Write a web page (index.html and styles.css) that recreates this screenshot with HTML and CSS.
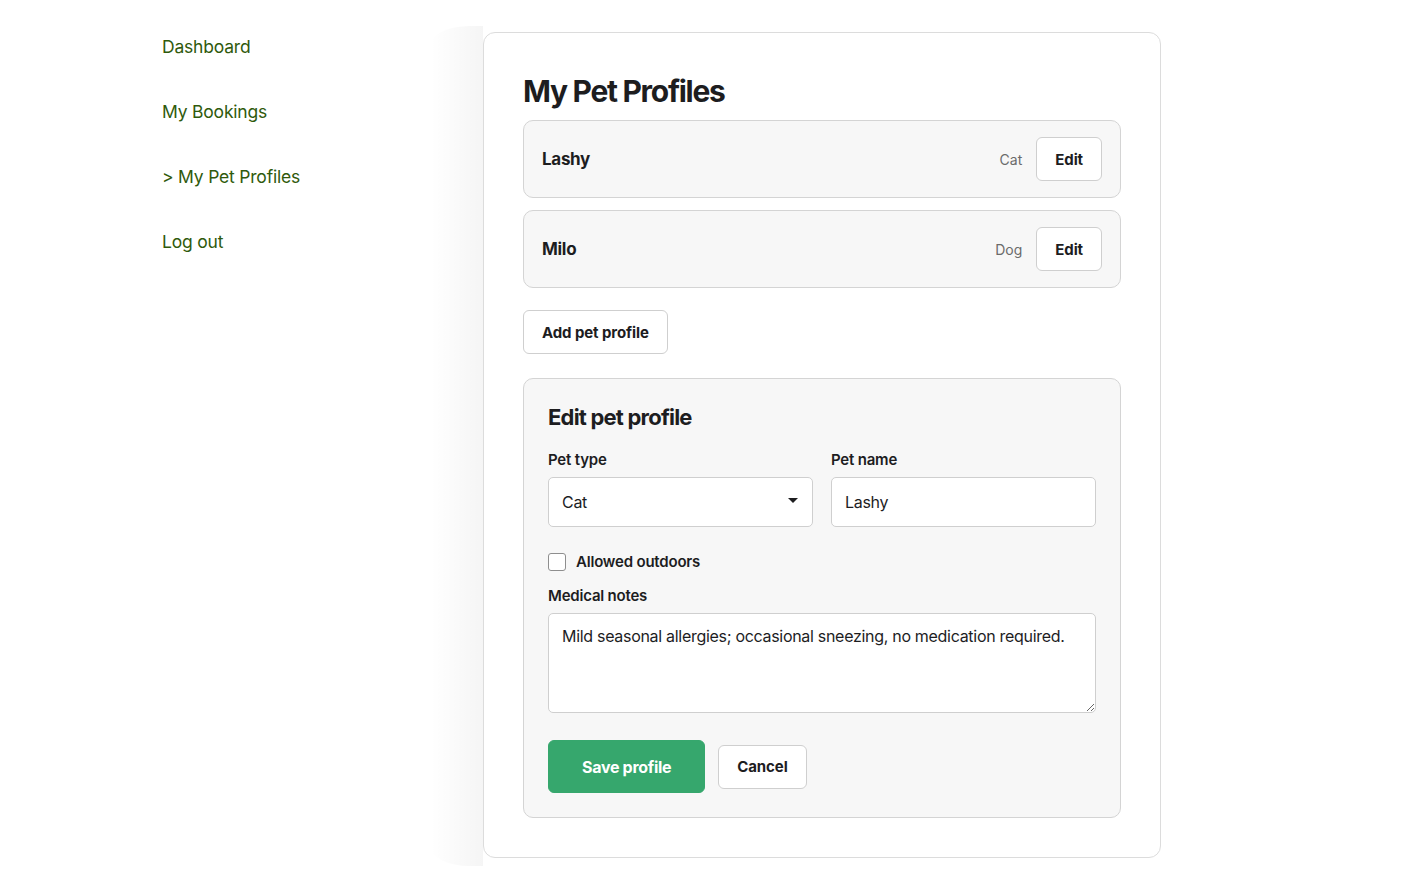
FILE: index.html
```html
<!DOCTYPE html>
<html>
<head>
  <title>My Pet Profiles</title>
  <link rel="stylesheet" href="styles.css">
</head>
<body>

<div class="layout">
  <nav class="sidebar">
    <a href="#">Dashboard</a>
    <a href="#">My Bookings</a>
    <a href="#" class="active">&gt; My Pet Profiles</a>
    <a href="#">Log out</a>
  </nav>

  <div class="fade"></div>

  <main class="card">
    <h1>My Pet Profiles</h1>

    <div class="pet-row">
      <span class="pet-name">Lashy</span>
      <span class="pet-type">Cat</span>
      <button class="btn">Edit</button>
    </div>

    <div class="pet-row">
      <span class="pet-name">Milo</span>
      <span class="pet-type">Dog</span>
      <button class="btn">Edit</button>
    </div>

    <button class="btn add-btn">Add pet profile</button>

    <section class="edit-panel">
      <h2>Edit pet profile</h2>

      <div class="field-grid">
        <div class="field">
          <label>Pet type</label>
          <div class="select-wrap">
            <select>
              <option>Cat</option>
              <option>Dog</option>
            </select>
          </div>
        </div>
        <div class="field">
          <label>Pet name</label>
          <input type="text" value="Lashy">
        </div>
      </div>

      <div class="check-row">
        <input type="checkbox" id="outdoors">
        <label for="outdoors">Allowed outdoors</label>
      </div>

      <label class="notes-label">Medical notes</label>
      <textarea>Mild seasonal allergies; occasional sneezing, no medication required.</textarea>

      <div class="actions">
        <button class="btn btn-primary">Save profile</button>
        <button class="btn">Cancel</button>
      </div>
    </section>
  </main>
</div>

</body>
</html>
```

FILE: styles.css
```css
body {
  margin: 0;
  padding: 0;
  background: white;
  font-family: 'Inter', 'Noto Sans', sans-serif;
  color: #1d1d1f;
}

.layout {
  display: flex;
  align-items: flex-start;
  padding-left: 162px;
}

.sidebar {
  width: 268px;
  display: flex;
  flex-direction: column;
  gap: 43px;
  padding-top: 36px;
}

.sidebar a {
  color: #2f5a0c;
  text-decoration: none;
  font-size: 17.5px;
  line-height: 22px;
  letter-spacing: -0.2px;
}

.fade {
  width: 53px;
  height: 840px;
  margin-top: 26px;
  background: linear-gradient(to right, rgba(0,0,0,0), rgba(0,0,0,0.04));
  border-top-left-radius: 40px 20px;
  border-bottom-left-radius: 40px 20px;
}

.card {
  width: 598px;
  margin-top: 32px;
  padding: 40px 39px 39px 39px;
  border: 1px solid #dcdcdc;
  border-radius: 12px;
  background: white;
}

h1 {
  margin: 0 0 11px;
  font-size: 30px;
  line-height: 36px;
  font-weight: 700;
  letter-spacing: -1.3px;
}

.pet-row {
  display: flex;
  align-items: center;
  padding: 16px 18px;
  margin-bottom: 12px;
  background-color: #f7f7f7;
  border: 1px solid #d4d4d4;
  border-radius: 10px;
}

.pet-name {
  flex: 1;
  font-size: 17px;
  font-weight: 700;
  letter-spacing: -0.3px;
}

.pet-type {
  font-size: 14px;
  color: #6b6b6b;
  margin-right: 14px;
}

.btn {
  height: 44px;
  padding: 0 18px;
  background: white;
  color: #1d1d1f;
  border: 1px solid #cfcfcf;
  border-radius: 6px;
  font-family: inherit;
  font-size: 15px;
  font-weight: 700;
  letter-spacing: -0.1px;
  cursor: pointer;
}

.add-btn {
  margin-top: 10px;
}

.edit-panel {
  margin-top: 24px;
  padding: 24px;
  background-color: #f7f7f7;
  border: 1px solid #d4d4d4;
  border-radius: 10px;
}

h2 {
  margin: 0 0 18px;
  font-size: 22px;
  line-height: 28px;
  font-weight: 700;
  letter-spacing: -0.8px;
}

.field-grid {
  display: grid;
  grid-template-columns: 1fr 1fr;
  gap: 18px;
}

.field label, .notes-label {
  display: block;
  font-size: 15px;
  line-height: 20px;
  font-weight: 600;
  letter-spacing: -0.2px;
  margin-bottom: 8px;
}

.field label {
  margin-top: 1px;
  margin-bottom: 7px;
}

input[type="text"], select, textarea {
  box-sizing: border-box;
  width: 100%;
  height: 50px;
  padding: 0 13px;
  background: white;
  border: 1px solid #cfcfcf;
  border-radius: 5px;
  font-family: inherit;
  font-size: 16px;
  letter-spacing: -0.3px;
  color: #1d1d1f;
}

.select-wrap {
  position: relative;
}

.select-wrap select {
  appearance: none;
  -webkit-appearance: none;
}

.select-wrap::after {
  content: "";
  position: absolute;
  right: 15px;
  top: 21px;
  border-left: 5px solid transparent;
  border-right: 5px solid transparent;
  border-top: 5px solid #1d1d1f;
  pointer-events: none;
}

.check-row {
  display: flex;
  align-items: center;
  gap: 10px;
  margin-top: 25px;
  margin-bottom: 14px;
}

.check-row input {
  appearance: none;
  -webkit-appearance: none;
  width: 18px;
  height: 18px;
  margin: 0;
  background: white;
  border: 1px solid #8e8e8e;
  border-radius: 3px;
}

.check-row label {
  font-size: 15px;
  line-height: 20px;
  font-weight: 600;
  letter-spacing: -0.2px;
}

.notes-label {
  margin-bottom: 7px;
}

textarea {
  display: block;
  height: 100px;
  padding: 11px 13px;
  line-height: 22px;
  resize: vertical;
}

.actions {
  display: flex;
  align-items: center;
  gap: 13px;
  margin-top: 27px;
}

.btn-primary {
  height: 53px;
  padding: 0 33px;
  background-color: #36a76d;
  border-color: #36a76d;
  color: white;
  font-size: 16px;
  letter-spacing: -0.3px;
}
```
